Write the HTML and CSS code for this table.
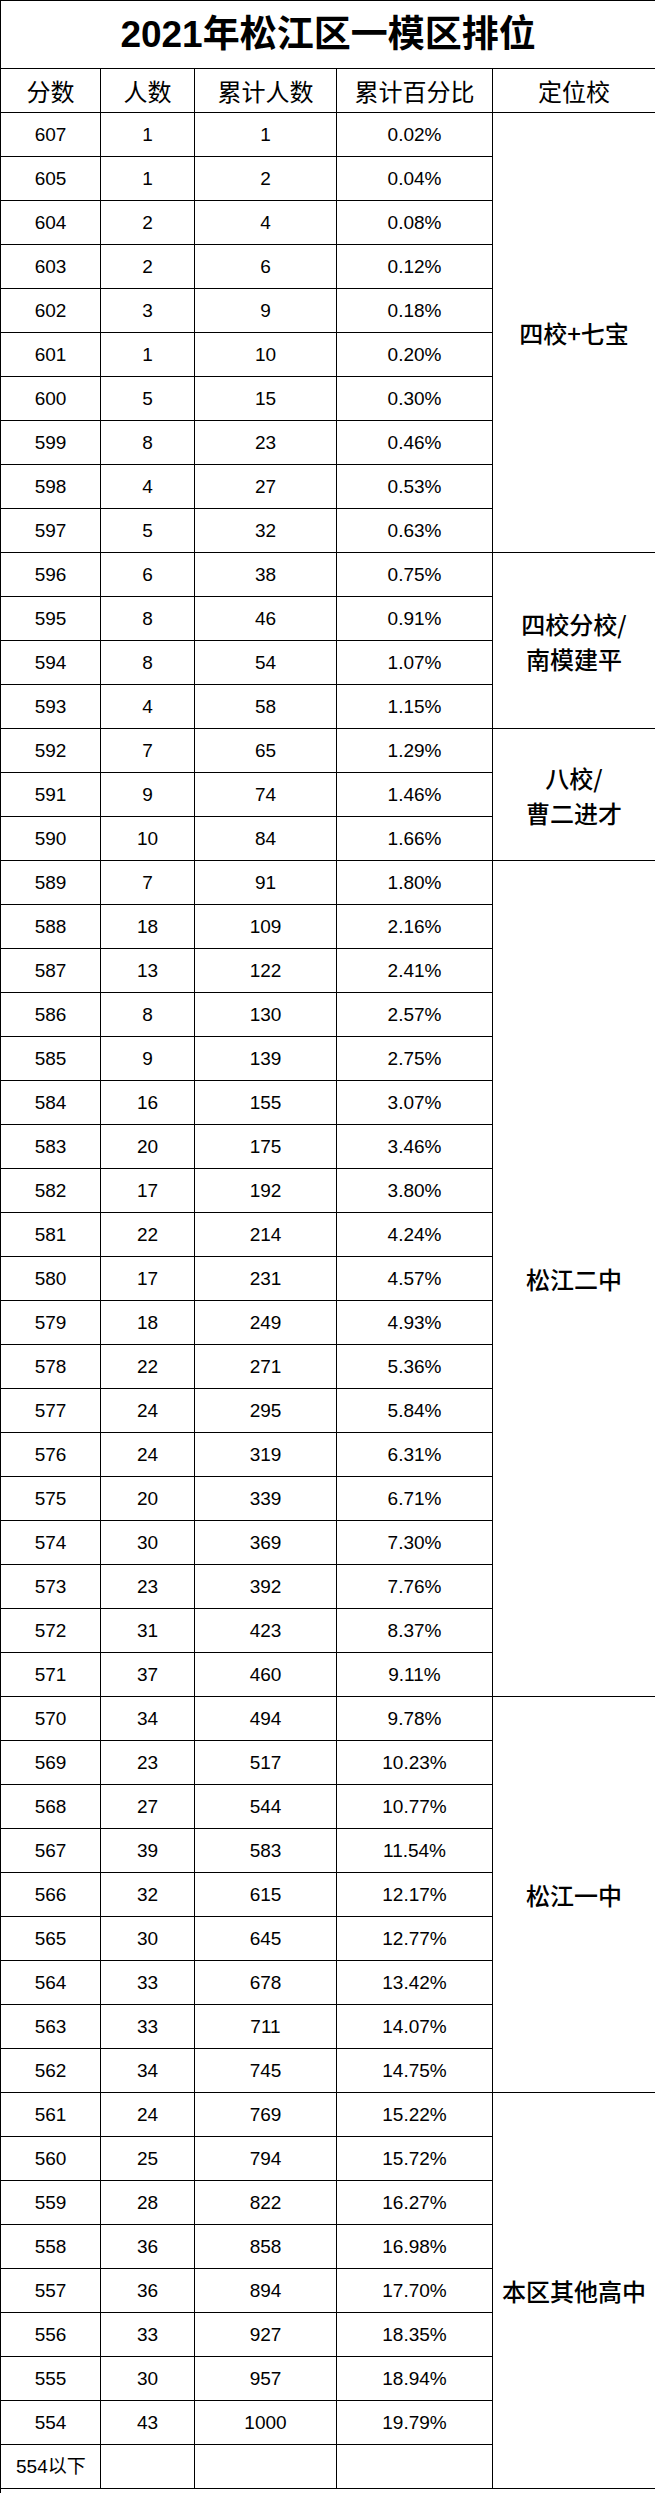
FILE: index.html
```html
<!DOCTYPE html>
<html lang="zh">
<head>
<meta charset="utf-8">
<title>2021年松江区一模区排位</title>
<link rel="stylesheet" href="styles.css">
</head>
<body>
<table class="rank">
<colgroup>
<col class="c1"><col class="c2"><col class="c3"><col class="c4"><col class="c5">
</colgroup>
<thead>
<tr class="title-row"><th colspan="5" class="title">2021年松江区一模区排位</th></tr>
<tr class="head-row"><th>分数</th><th>人数</th><th>累计人数</th><th>累计百分比</th><th>定位校</th></tr>
</thead>
<tbody>
<tr><td>607</td><td>1</td><td>1</td><td>0.02%</td><td class="grp" rowspan="10">四校+七宝</td></tr>
<tr><td>605</td><td>1</td><td>2</td><td>0.04%</td></tr>
<tr><td>604</td><td>2</td><td>4</td><td>0.08%</td></tr>
<tr><td>603</td><td>2</td><td>6</td><td>0.12%</td></tr>
<tr><td>602</td><td>3</td><td>9</td><td>0.18%</td></tr>
<tr><td>601</td><td>1</td><td>10</td><td>0.20%</td></tr>
<tr><td>600</td><td>5</td><td>15</td><td>0.30%</td></tr>
<tr><td>599</td><td>8</td><td>23</td><td>0.46%</td></tr>
<tr><td>598</td><td>4</td><td>27</td><td>0.53%</td></tr>
<tr><td>597</td><td>5</td><td>32</td><td>0.63%</td></tr>
<tr><td>596</td><td>6</td><td>38</td><td>0.75%</td><td class="grp" rowspan="4">四校分校/<br>南模建平</td></tr>
<tr><td>595</td><td>8</td><td>46</td><td>0.91%</td></tr>
<tr><td>594</td><td>8</td><td>54</td><td>1.07%</td></tr>
<tr><td>593</td><td>4</td><td>58</td><td>1.15%</td></tr>
<tr><td>592</td><td>7</td><td>65</td><td>1.29%</td><td class="grp" rowspan="3">八校/<br>曹二进才</td></tr>
<tr><td>591</td><td>9</td><td>74</td><td>1.46%</td></tr>
<tr><td>590</td><td>10</td><td>84</td><td>1.66%</td></tr>
<tr><td>589</td><td>7</td><td>91</td><td>1.80%</td><td class="grp" rowspan="19">松江二中</td></tr>
<tr><td>588</td><td>18</td><td>109</td><td>2.16%</td></tr>
<tr><td>587</td><td>13</td><td>122</td><td>2.41%</td></tr>
<tr><td>586</td><td>8</td><td>130</td><td>2.57%</td></tr>
<tr><td>585</td><td>9</td><td>139</td><td>2.75%</td></tr>
<tr><td>584</td><td>16</td><td>155</td><td>3.07%</td></tr>
<tr><td>583</td><td>20</td><td>175</td><td>3.46%</td></tr>
<tr><td>582</td><td>17</td><td>192</td><td>3.80%</td></tr>
<tr><td>581</td><td>22</td><td>214</td><td>4.24%</td></tr>
<tr><td>580</td><td>17</td><td>231</td><td>4.57%</td></tr>
<tr><td>579</td><td>18</td><td>249</td><td>4.93%</td></tr>
<tr><td>578</td><td>22</td><td>271</td><td>5.36%</td></tr>
<tr><td>577</td><td>24</td><td>295</td><td>5.84%</td></tr>
<tr><td>576</td><td>24</td><td>319</td><td>6.31%</td></tr>
<tr><td>575</td><td>20</td><td>339</td><td>6.71%</td></tr>
<tr><td>574</td><td>30</td><td>369</td><td>7.30%</td></tr>
<tr><td>573</td><td>23</td><td>392</td><td>7.76%</td></tr>
<tr><td>572</td><td>31</td><td>423</td><td>8.37%</td></tr>
<tr><td>571</td><td>37</td><td>460</td><td>9.11%</td></tr>
<tr><td>570</td><td>34</td><td>494</td><td>9.78%</td><td class="grp" rowspan="9">松江一中</td></tr>
<tr><td>569</td><td>23</td><td>517</td><td>10.23%</td></tr>
<tr><td>568</td><td>27</td><td>544</td><td>10.77%</td></tr>
<tr><td>567</td><td>39</td><td>583</td><td>11.54%</td></tr>
<tr><td>566</td><td>32</td><td>615</td><td>12.17%</td></tr>
<tr><td>565</td><td>30</td><td>645</td><td>12.77%</td></tr>
<tr><td>564</td><td>33</td><td>678</td><td>13.42%</td></tr>
<tr><td>563</td><td>33</td><td>711</td><td>14.07%</td></tr>
<tr><td>562</td><td>34</td><td>745</td><td>14.75%</td></tr>
<tr><td>561</td><td>24</td><td>769</td><td>15.22%</td><td class="grp" rowspan="9">本区其他高中</td></tr>
<tr><td>560</td><td>25</td><td>794</td><td>15.72%</td></tr>
<tr><td>559</td><td>28</td><td>822</td><td>16.27%</td></tr>
<tr><td>558</td><td>36</td><td>858</td><td>16.98%</td></tr>
<tr><td>557</td><td>36</td><td>894</td><td>17.70%</td></tr>
<tr><td>556</td><td>33</td><td>927</td><td>18.35%</td></tr>
<tr><td>555</td><td>30</td><td>957</td><td>18.94%</td></tr>
<tr><td>554</td><td>43</td><td>1000</td><td>19.79%</td></tr>
<tr><td class="below">554以下</td><td></td><td></td><td></td></tr>
<tr class="tail"><td colspan="5"></td></tr>
</tbody>
</table>
</body>
</html>
```

FILE: styles.css
```css
html, body {
  margin: 0;
  padding: 0;
  background: #ffffff;
}

.rank {
  border-collapse: collapse;
  table-layout: fixed;
  width: 655px;
  color: #000000;
  font-family: "Liberation Sans", "Noto Sans CJK SC", sans-serif;
}

.c1 { width: 100px; }
.c2 { width: 94px; }
.c3 { width: 142px; }
.c4 { width: 156px; }
.c5 { width: 163px; }

.rank th,
.rank td {
  border: 1px solid #000000;
  padding: 0;
  text-align: center;
  vertical-align: middle;
  white-space: nowrap;
}

.title {
  font-size: 37px;
  line-height: 67px;
  font-weight: bold;
  font-family: "Liberation Sans", "Noto Sans CJK SC", sans-serif;
}

.head-row th {
  font-size: 24px;
  line-height: 43px;
  font-weight: normal;
  font-family: "Noto Sans CJK SC", sans-serif;
}

.rank tbody td {
  font-size: 19px;
  line-height: 43px;
}

.rank tbody td.grp {
  font-size: 24px;
  line-height: 35px;
  font-family: "Noto Sans CJK SC", sans-serif;
  font-weight: 500;
}

.rank tbody td.below {
  text-align: left;
  padding-left: 15px;
}

.rank tbody .tail td {
  height: 40px;
  line-height: 40px;
  border-bottom: none;
}
```
